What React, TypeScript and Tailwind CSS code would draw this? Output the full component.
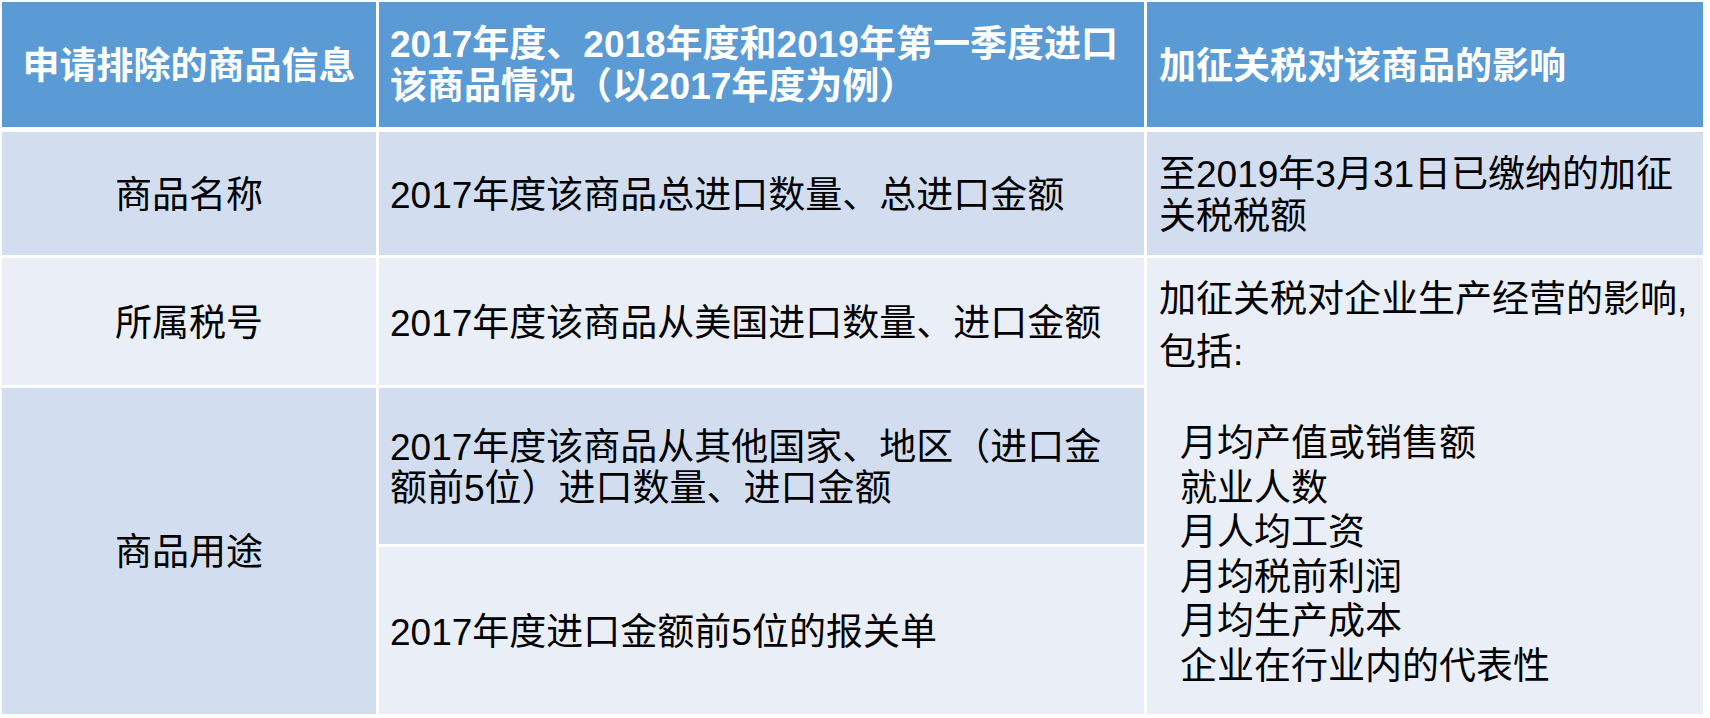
const font = "font-['Liberation_Sans','Noto_Sans_CJK_SC',sans-serif]";

const impacts = [
  "月均产值或销售额",
  "就业人数",
  "月人均工资",
  "月均税前利润",
  "月均生产成本",
  "企业在行业内的代表性",
];

export default function App() {
  return (
    <div className={`w-[1710px] h-[718px] bg-white p-[2px] text-[37px] ${font}`}>
      {/* header row */}
      <div className="grid grid-cols-[374px_765px_556px] gap-x-[3px] h-[125px] mb-[5px] text-white font-bold">
        <div className="bg-[#5b9bd5] flex items-center justify-center pt-[4px] leading-[41.5px] whitespace-nowrap">
          申请排除的商品信息
        </div>
        <div className="bg-[#5b9bd5] flex items-center pl-[11px] pt-[2px] leading-[41.5px] whitespace-nowrap">
          <div>
            2017年度、2018年度和2019年第一季度进口
            <br />
            该商品情况（以2017年度为例）
          </div>
        </div>
        <div className="bg-[#5b9bd5] flex items-center pl-[12px] pt-[4px] leading-[41.5px] whitespace-nowrap">
          加征关税对该商品的影响
        </div>
      </div>

      {/* body */}
      <div className="grid grid-cols-[374px_765px_556px] grid-rows-[123px_127px_156px_167px] gap-[3px] text-black leading-[41.5px] whitespace-nowrap">
        <div className="bg-[#d2deef] flex items-center justify-center pt-[4px]">商品名称</div>
        <div className="bg-[#d2deef] flex items-center pl-[11px] pt-[4px]">
          2017年度该商品总进口数量、总进口金额
        </div>
        <div className="bg-[#d2deef] flex items-center pl-[12px] pt-[4px]">
          <div>
            至2019年3月31日已缴纳的加征
            <br />
            关税税额
          </div>
        </div>

        <div className="bg-[#eaeff7] flex items-center justify-center pt-[4px]">所属税号</div>
        <div className="bg-[#eaeff7] flex items-center pl-[11px] pt-[4px]">
          2017年度该商品从美国进口数量、进口金额
        </div>
        <div className="row-span-3 bg-[#eaeff7] pl-[12px] pt-[21px]">
          <div>加征关税对企业生产经营的影响,</div>
          <div className="mt-[11px]">包括:</div>
          <div className="mt-[49px] pl-[21px] leading-[44.6px]">
            {impacts.map((item) => (
              <div key={item}>{item}</div>
            ))}
          </div>
        </div>

        <div className="row-span-2 bg-[#d2deef] flex items-center justify-center pt-[4px]">商品用途</div>
        <div className="bg-[#d2deef] flex items-center pl-[11px] pt-[4px]">
          <div>
            2017年度该商品从其他国家、地区（进口金
            <br />
            额前5位）进口数量、进口金额
          </div>
        </div>
        <div className="bg-[#eaeff7] flex items-center pl-[11px] pt-[4px]">
          2017年度进口金额前5位的报关单
        </div>
      </div>
    </div>
  );
}
